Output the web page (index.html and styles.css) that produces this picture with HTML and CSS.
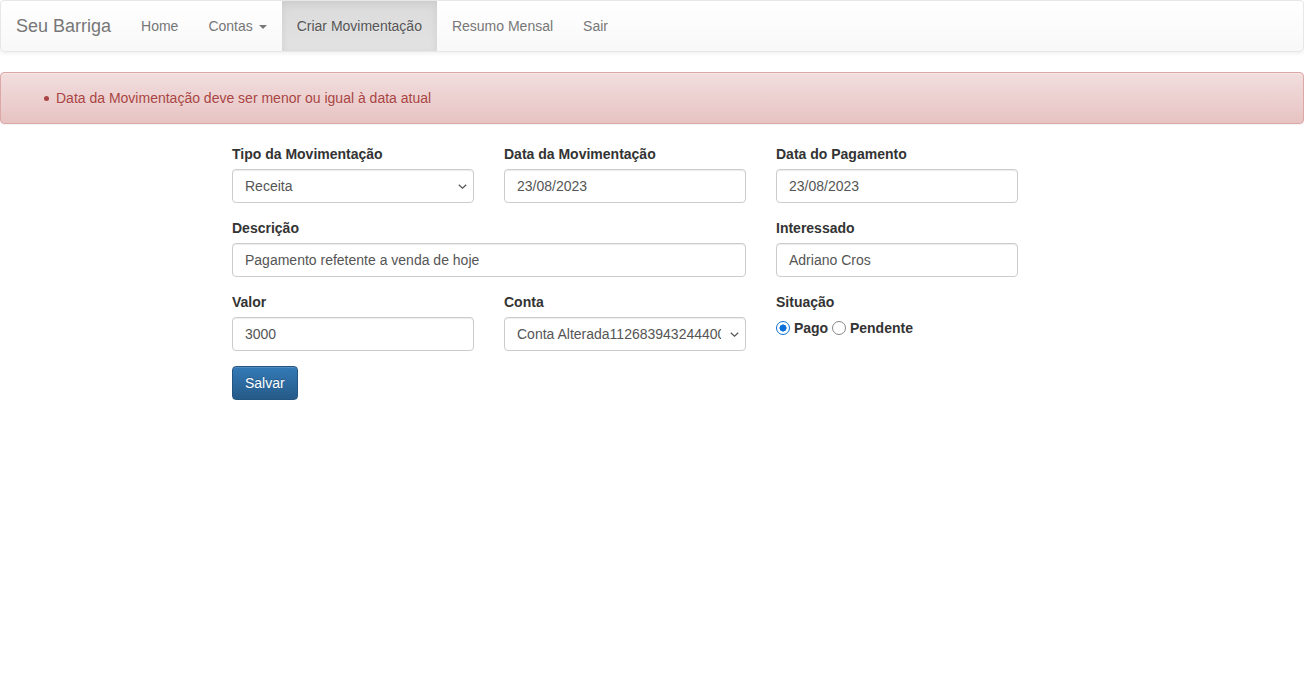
FILE: index.html
```html
<!DOCTYPE html>
<html lang="pt-BR">
<head>
<meta charset="utf-8">
<title>Seu Barriga</title>
<link rel="stylesheet" href="styles.css">
</head>
<body>
<nav class="navbar">
  <a class="brand" href="#">Seu Barriga</a>
  <ul class="nav">
    <li><a href="#">Home</a></li>
    <li><a href="#">Contas <span class="caret"></span></a></li>
    <li class="active"><a href="#">Criar Movimentação</a></li>
    <li><a href="#">Resumo Mensal</a></li>
    <li><a href="#">Sair</a></li>
  </ul>
</nav>
<div class="alert">
  <ul>
    <li>Data da Movimentação deve ser menor ou igual à data atual</li>
  </ul>
</div>
<form class="form">
  <div class="grid">
    <div class="group">
      <label class="lbl" for="tipo">Tipo da Movimentação</label>
      <select id="tipo" class="control sel"><option>Receita</option><option>Despesa</option></select>
    </div>
    <div class="group">
      <label class="lbl" for="dm">Data da Movimentação</label>
      <input id="dm" class="control" type="text" value="23/08/2023">
    </div>
    <div class="group">
      <label class="lbl" for="dp">Data do Pagamento</label>
      <input id="dp" class="control" type="text" value="23/08/2023">
    </div>
    <div class="group span2">
      <label class="lbl" for="desc">Descrição</label>
      <input id="desc" class="control" type="text" value="Pagamento refetente a venda de hoje">
    </div>
    <div class="group">
      <label class="lbl" for="int">Interessado</label>
      <input id="int" class="control" type="text" value="Adriano Cros">
    </div>
    <div class="group">
      <label class="lbl" for="valor">Valor</label>
      <input id="valor" class="control" type="text" value="3000">
    </div>
    <div class="group">
      <label class="lbl" for="conta">Conta</label>
      <select id="conta" class="control sel"><option>Conta Alterada1126839432444000</option></select>
    </div>
    <div class="group">
      <label class="lbl">Situação</label>
      <div class="radios">
        <input type="radio" class="radio" id="pago" name="sit" checked> <label class="rlbl" for="pago">Pago</label> <input type="radio" class="radio" id="pend" name="sit"> <label class="rlbl" for="pend">Pendente</label>
      </div>
    </div>
  </div>
  <button type="button" class="btn">Salvar</button>
</form>
</body>
</html>
```

FILE: styles.css
```css
* { box-sizing: border-box; }
html, body { margin: 0; }
body {
  font-family: "Liberation Sans", Arial, Helvetica, sans-serif;
  font-size: 14px;
  line-height: 20px;
  color: #333;
  background: #fff;
}
a { text-decoration: none; }

.navbar {
  display: flex;
  align-items: stretch;
  height: 52px;
  margin-bottom: 20px;
  border: 1px solid #e7e7e7;
  border-radius: 4px;
  background: linear-gradient(to bottom, #fff 0%, #f8f8f8 100%);
  box-shadow: inset 0 1px 0 rgba(255,255,255,.15), 0 1px 5px rgba(0,0,0,.075);
}
.brand {
  padding: 15px;
  font-size: 18px;
  line-height: 20px;
  color: #777;
  text-shadow: 0 1px 0 rgba(255,255,255,.25);
}
.nav {
  display: flex;
  list-style: none;
  margin: 0;
  padding: 0;
}
.nav li a {
  display: block;
  padding: 15px;
  line-height: 20px;
  color: #777;
  text-shadow: 0 1px 0 rgba(255,255,255,.25);
}
.nav li.active a {
  color: #555;
  background: linear-gradient(to bottom, #dbdbdb 0%, #e2e2e2 100%);
  box-shadow: inset 0 3px 9px rgba(0,0,0,.075);
}
.caret {
  display: inline-block;
  width: 0;
  height: 0;
  margin-left: 2px;
  vertical-align: middle;
  border-top: 4px solid;
  border-right: 4px solid transparent;
  border-left: 4px solid transparent;
}

.alert {
  padding: 15px;
  margin-bottom: 20px;
  border: 1px solid #dca7a7;
  border-radius: 4px;
  color: #a94442;
  background: linear-gradient(to bottom, #f2dede 0%, #e7c3c3 100%);
  box-shadow: inset 0 1px 0 rgba(255,255,255,.25), 0 1px 2px rgba(0,0,0,.05);
  text-shadow: 0 1px 0 rgba(255,255,255,.2);
}
.alert ul { margin: 0; padding-left: 40px; list-style: none; }
.alert li::before {
  content: "";
  display: inline-block;
  width: 5px;
  height: 5px;
  border-radius: 50%;
  background: currentColor;
  margin-left: -12px;
  margin-right: 7px;
  vertical-align: middle;
  position: relative;
  top: -1px;
}

.form { padding-left: 232px; }
.grid {
  display: grid;
  grid-template-columns: repeat(3, 242px);
  column-gap: 30px;
}
.span2 { grid-column: span 2; }
.group { margin-bottom: 15px; }
.lbl {
  display: block;
  margin-bottom: 5px;
  font-weight: bold;
}
.control {
  display: block;
  width: 100%;
  height: 34px;
  padding: 6px 12px;
  font-family: inherit;
  font-size: 14px;
  line-height: 20px;
  color: #555;
  background-color: #fff;
  border: 1px solid #ccc;
  border-radius: 4px;
  box-shadow: inset 0 1px 1px rgba(0,0,0,.075);
  outline: none;
}
.sel {
  -webkit-appearance: none;
  appearance: none;
  padding-right: 24px;
  background-image: url("data:image/svg+xml,%3Csvg xmlns='http://www.w3.org/2000/svg' width='9' height='5' viewBox='0 0 9 5'%3E%3Cpath d='M0.8 0.8l3.7 3.4 3.7-3.4' fill='none' stroke='%23555' stroke-width='1.2'/%3E%3C/svg%3E");
  background-repeat: no-repeat;
  background-position: right 6px center;
  background-size: 9px 5px;
}
.radios { display: block; line-height: 20px; padding-top: 1px; }
.radio {
  -webkit-appearance: none;
  appearance: none;
  display: inline-block;
  width: 14px;
  height: 14px;
  margin: 3px 0 0;
  vertical-align: top;
  border: 1.5px solid #858585;
  border-radius: 50%;
  background: #fff;
}
.radio:checked {
  border-color: #0b6fd8;
  background: radial-gradient(circle, #0b6fd8 0 3.3px, #fff 3.8px);
}
.rlbl { font-weight: bold; }

.btn {
  display: inline-block;
  padding: 6px 12px;
  font-family: inherit;
  font-size: 14px;
  line-height: 20px;
  color: #fff;
  background: linear-gradient(to bottom, #337ab7 0%, #265a88 100%);
  border: 1px solid #245580;
  border-radius: 4px;
  box-shadow: inset 0 1px 0 rgba(255,255,255,.15), 0 1px 1px rgba(0,0,0,.075);
  text-shadow: 0 -1px 0 rgba(0,0,0,.2);
  cursor: pointer;
}
```
